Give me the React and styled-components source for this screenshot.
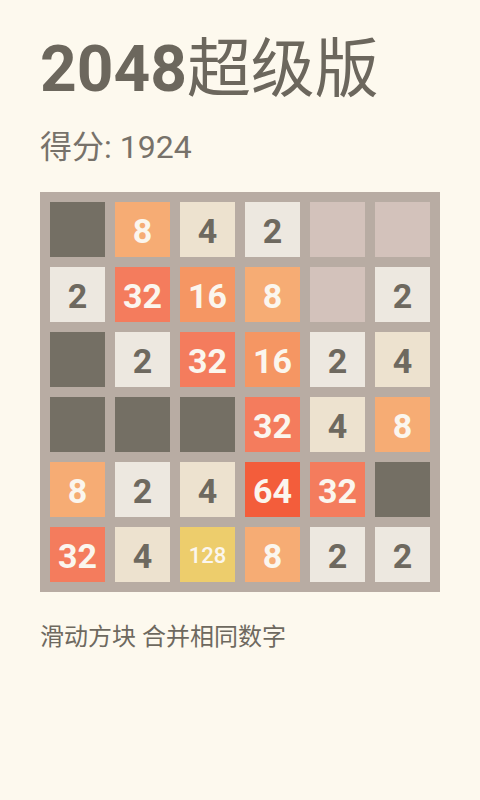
import React from "react";
import styled, { createGlobalStyle } from "styled-components";

const GlobalStyle = createGlobalStyle`
  html, body {
    margin: 0;
    padding: 0;
    background: #fdf9ee;
  }
  body {
    font-family: Roboto, "Noto Sans CJK SC", sans-serif;
  }
`;

const board = [
  ["x", 8, 4, 2, 0, 0],
  [2, 32, 16, 8, 0, 2],
  ["x", 2, 32, 16, 2, 4],
  ["x", "x", "x", 32, 4, 8],
  [8, 2, 4, 64, 32, "x"],
  [32, 4, 128, 8, 2, 2],
];

const tileColors = {
  x: "#746f64",
  0: "#d3c2bb",
  2: "#ede8e0",
  4: "#ede2cf",
  8: "#f6ac74",
  16: "#f59663",
  32: "#f47c5d",
  64: "#f35d3b",
  128: "#edcd6c",
};

const Page = styled.div`
  width: 480px;
  height: 800px;
  padding: 34px 40px 0;
  box-sizing: border-box;
  background: #fdf9ee;
`;

const Title = styled.h1`
  margin: 0;
  font-size: 64px;
  line-height: 72px;
  font-weight: 700;
  color: #6c675d;
  white-space: nowrap;
`;

const TitleCjk = styled.span`
  font-weight: 400;
`;

const Score = styled.div`
  margin-top: 21px;
  font-size: 32px;
  line-height: 40px;
  color: #77726a;
`;

const Board = styled.div`
  margin-top: 25px;
  width: 400px;
  height: 400px;
  box-sizing: border-box;
  padding: 10px;
  background: #b8aca3;
  display: grid;
  grid-template-columns: repeat(6, 55px);
  grid-template-rows: repeat(6, 55px);
  gap: 10px;
`;

const Tile = styled.div`
  background: ${(p) => tileColors[p.$value]};
  color: ${(p) => (p.$value === 2 || p.$value === 4 ? "#6e695f" : "#fbf6ee")};
  display: flex;
  align-items: center;
  justify-content: center;
  font-weight: ${(p) => (p.$value >= 100 ? 500 : 700)};
  font-size: ${(p) => (p.$value >= 100 ? "22px" : "34px")};
  line-height: 1;
  padding-top: 2px;
  box-sizing: border-box;
`;

const Hint = styled.p`
  margin: 29px 0 0;
  font-size: 24px;
  line-height: 32px;
  color: #6e695f;
`;

export default function App() {
  return (
    <Page>
      <GlobalStyle />
      <Title>
        2048<TitleCjk>超级版</TitleCjk>
      </Title>
      <Score>得分: 1924</Score>
      <Board>
        {board.flat().map((v, i) => (
          <Tile key={i} $value={v}>
            {typeof v === "number" && v > 0 ? v : ""}
          </Tile>
        ))}
      </Board>
      <Hint>滑动方块 合并相同数字</Hint>
    </Page>
  );
}
